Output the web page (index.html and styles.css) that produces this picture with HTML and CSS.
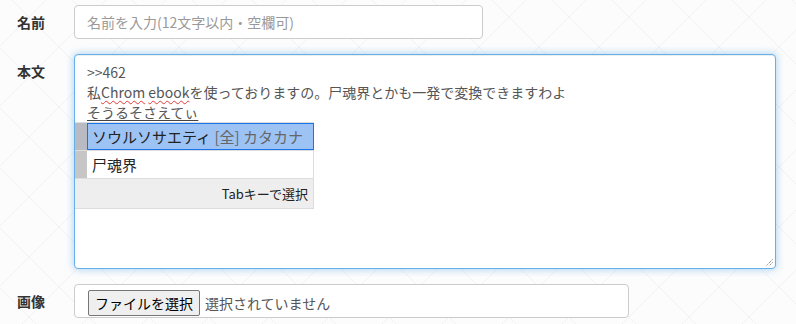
FILE: index.html
```html
<!DOCTYPE html>
<html lang="ja">
<head>
<meta charset="utf-8">
<link rel="stylesheet" href="styles.css">
</head>
<body>
<form class="form">
  <label class="label">名前</label>
  <div class="field"><div class="input name-input"><span class="placeholder">名前を入力(12文字以内・空欄可)</span></div></div>

  <label class="label">本文</label>
  <div class="field">
    <div class="textarea">
      <div class="line">&gt;&gt;462</div>
      <div class="line">私<span class="spell">Chrom</span> <span class="spell">ebook</span>を使っておりますの。尸魂界とかも一発で変換できますわよ</div>
      <div class="line"><span class="composing">そうるそさえてぃ</span></div>
      <div class="ime">
        <div class="cand selected"><span class="strip"></span><span class="cand-text">ソウルソサエティ <span class="hint">[全] カタカナ</span></span></div>
        <div class="cand"><span class="strip"></span><span class="cand-text">尸魂界</span></div>
        <div class="ime-foot">Tabキーで選択</div>
      </div>
      <svg class="grip" width="8" height="8" viewBox="0 0 8 8"><path d="M7.5 1.5 L1.5 7.5 M7.5 4.5 L4.5 7.5" stroke="#555" stroke-width="1" stroke-dasharray="1 1" fill="none"/></svg>
    </div>
  </div>

  <label class="label">画像</label>
  <div class="field"><div class="input file-input"><span class="file-btn">ファイルを選択</span><span class="file-none">選択されていません</span></div></div>
</form>
</body>
</html>
```
FILE: styles.css
```css
html, body {
  margin: 0;
  padding: 0;
}
body {
  width: 796px;
  height: 324px;
  overflow: hidden;
  font-family: "Noto Sans CJK JP", "Noto Sans", sans-serif;
  font-size: 14px;
  background-color: #fcfcfc;
  background-image:
    linear-gradient(45deg, transparent calc(50% - 0.6px), #f2f2f2 50%, transparent calc(50% + 0.6px)),
    linear-gradient(-45deg, transparent calc(50% - 0.6px), #f2f2f2 50%, transparent calc(50% + 0.6px));
  background-size: 60px 60px;
  background-position: 59px 47px;
}
.form {
  display: grid;
  grid-template-columns: 57px auto;
  row-gap: 15px;
  padding: 5px 0 0 17px;
}
.label {
  font-weight: bold;
  color: #333;
  line-height: 20px;
  padding-top: 7px;
}
.field {
  display: flex;
}
.input {
  box-sizing: border-box;
  height: 34px;
  border: 1px solid #ccc;
  border-radius: 4px;
  background: #fff;
  display: flex;
  align-items: center;
}
.name-input {
  width: 409px;
  padding: 0 12px;
}
.placeholder {
  color: #999;
}
.textarea {
  position: relative;
  box-sizing: border-box;
  width: 702px;
  height: 215px;
  border: 1px solid #66afe9;
  border-radius: 4px;
  background: #fff;
  box-shadow: inset 0 1px 1px rgba(0,0,0,.075), 0 0 8px rgba(102,175,233,.6);
  padding: 7px 12px;
  color: #555;
  line-height: 20px;
}
.spell {
  text-decoration: underline wavy #e53935;
  text-decoration-thickness: 1px;
  text-underline-offset: 2px;
}
.composing {
  text-decoration: underline #444;
  text-underline-offset: 2px;
}
.ime {
  position: absolute;
  left: 0;
  top: 67px;
  width: 239px;
  background: #fff;
  border: 1px solid #ddd;
  border-left: none;
  box-sizing: border-box;
  color: #222;
  font-size: 15px;
}
.cand {
  display: flex;
  height: 27px;
  border-bottom: 1px solid #ddd;
}
.strip {
  width: 12px;
  flex: none;
  background: #c6c6c6;
}
.cand.selected .strip {
  background: #b8bcc2;
}
.cand-text {
  flex: 1;
  display: flex;
  align-items: center;
  padding-left: 5px;
  white-space: pre;
}
.cand.selected .cand-text {
  background: #9dc3f4;
  border: 1px solid #1a73e8;
  padding-left: 4px;
  margin-right: -1px;
}
.hint {
  color: #666;
}
.ime-foot {
  height: 29px;
  background: #eee;
  font-size: 13px;
  color: #222;
  display: flex;
  align-items: center;
  justify-content: flex-end;
  padding-right: 5px;
}
.grip {
  position: absolute;
  right: 2px;
  bottom: 2px;
}
.file-input {
  width: 555px;
  padding: 0 13px;
  align-items: flex-end;
  padding-bottom: 1px;
}
.file-btn {
  box-sizing: border-box;
  height: 26px;
  padding: 0 6px;
  border: 1px solid #767676;
  border-radius: 2px;
  background: #efefef;
  color: #000;
  display: flex;
  align-items: center;
}
.file-none {
  color: #555;
  margin-left: 5px;
  line-height: 26px;
}
```
